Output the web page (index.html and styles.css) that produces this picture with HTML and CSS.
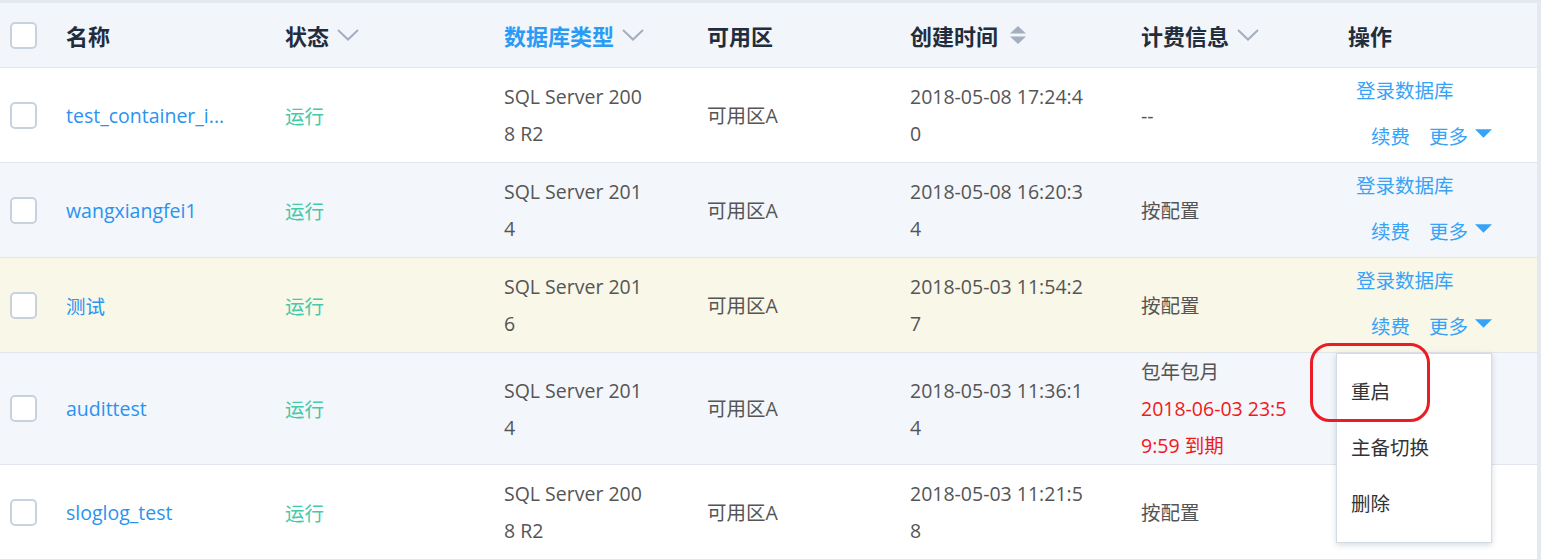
FILE: index.html
```html
<!DOCTYPE html>
<html lang="zh-CN">
<head>
<meta charset="utf-8">
<title>实例列表</title>
<link rel="stylesheet" href="styles.css">
</head>
<body>
<div class="page">
  <div class="tbl">
    <div class="row head">
      <div class="c chk"><span class="checkbox"></span></div>
      <div class="c"><span class="th">名称</span></div>
      <div class="c"><span class="th">状态</span><svg class="chev" viewBox="0 0 22 12"><polyline points="1,1 11,10.5 21,1"/></svg></div>
      <div class="c"><span class="th active">数据库类型</span><svg class="chev" viewBox="0 0 22 12"><polyline points="1,1 11,10.5 21,1"/></svg></div>
      <div class="c"><span class="th">可用区</span></div>
      <div class="c"><span class="th">创建时间</span><svg class="sort" viewBox="0 0 16 18"><polygon points="8,0 16,7.5 0,7.5"/><polygon points="0,10.5 16,10.5 8,18"/></svg></div>
      <div class="c"><span class="th">计费信息</span><svg class="chev" viewBox="0 0 22 12"><polyline points="1,1 11,10.5 21,1"/></svg></div>
      <div class="c"><span class="th">操作</span></div>
    </div>

    <div class="row">
      <div class="c chk"><span class="checkbox"></span></div>
      <div class="c name">test_container_i...</div>
      <div class="c run">运行</div>
      <div class="c txt w-type">SQL Server 2008 R2</div>
      <div class="c txt">可用区A</div>
      <div class="c txt w-time">2018-05-08 17:24:40</div>
      <div class="c txt">--</div>
      <div class="c ops"><a class="op1">登录数据库</a><div class="op2"><a>续费</a><a>更多</a><svg class="tri" viewBox="0 0 18 10"><polygon points="0,0 18,0 9,9"/></svg></div></div>
    </div>

    <div class="row alt">
      <div class="c chk"><span class="checkbox"></span></div>
      <div class="c name">wangxiangfei1</div>
      <div class="c run">运行</div>
      <div class="c txt w-type">SQL Server 2014</div>
      <div class="c txt">可用区A</div>
      <div class="c txt w-time">2018-05-08 16:20:34</div>
      <div class="c txt">按配置</div>
      <div class="c ops"><a class="op1">登录数据库</a><div class="op2"><a>续费</a><a>更多</a><svg class="tri" viewBox="0 0 18 10"><polygon points="0,0 18,0 9,9"/></svg></div></div>
    </div>

    <div class="row hover">
      <div class="c chk"><span class="checkbox"></span></div>
      <div class="c name">测试</div>
      <div class="c run">运行</div>
      <div class="c txt w-type">SQL Server 2016</div>
      <div class="c txt">可用区A</div>
      <div class="c txt w-time">2018-05-03 11:54:27</div>
      <div class="c txt">按配置</div>
      <div class="c ops"><a class="op1">登录数据库</a><div class="op2"><a>续费</a><a>更多</a><svg class="tri" viewBox="0 0 18 10"><polygon points="0,0 18,0 9,9"/></svg></div></div>
    </div>

    <div class="row alt">
      <div class="c chk"><span class="checkbox"></span></div>
      <div class="c name">audittest</div>
      <div class="c run">运行</div>
      <div class="c txt w-type">SQL Server 2014</div>
      <div class="c txt">可用区A</div>
      <div class="c txt w-time">2018-05-03 11:36:14</div>
      <div class="c txt w-bill">包年包月<br><span class="red">2018-06-03 23:59:59 到期</span></div>
      <div class="c ops covered"><a class="op1">登录数据库</a><div class="op2"><a>续费</a><a>更多</a><svg class="tri" viewBox="0 0 18 10"><polygon points="0,0 18,0 9,9"/></svg></div></div>
    </div>

    <div class="row">
      <div class="c chk"><span class="checkbox"></span></div>
      <div class="c name">sloglog_test</div>
      <div class="c run">运行</div>
      <div class="c txt w-type">SQL Server 2008 R2</div>
      <div class="c txt">可用区A</div>
      <div class="c txt w-time">2018-05-03 11:21:58</div>
      <div class="c txt">按配置</div>
      <div class="c ops"><a class="op1 covered">登录数据库</a><div class="op2"><a>续费</a><a>更多</a><svg class="tri" viewBox="0 0 18 10"><polygon points="0,0 18,0 9,9"/></svg></div></div>
    </div>
  </div>

  <ul class="menu">
    <li>重启</li>
    <li>主备切换</li>
    <li>删除</li>
  </ul>
  <div class="annot"></div>
</div>
</body>
</html>
```

FILE: styles.css
```css
* { box-sizing: border-box; }
html, body { margin: 0; padding: 0; background: #e4e9ef; }
body {
  font-family: "Open Sans", "Noto Sans CJK SC", sans-serif;
  font-size: 19.5px;
  color: #555555;
  overflow: hidden;
}
.page {
  position: relative;
  width: 1541px;
  border-top: 3px solid #e3e8ee;
  border-right: 4px solid #e4e9ef;
  background: #ffffff;
}
.tbl { display: flex; flex-direction: column; }
.row {
  display: grid;
  grid-template-columns: 66px 219px 219px 203px 203px 231px 207px 189px;
  align-items: center;
  min-height: 95px;
  border-bottom: 1px solid #e1e6ed;
  background: #ffffff;
}
.row.alt { background: #f3f6fa; }
.row.hover { background: #f8f7e8; }
.row.head {
  min-height: 65px;
  background: #f2f5f9;
}
.c {
  display: flex;
  align-items: center;
  min-width: 0;
}
.chk { padding-left: 10px; }
.checkbox {
  display: block;
  width: 27px;
  height: 27px;
  border: 2px solid #c8d2de;
  border-radius: 5px;
  background: #ffffff;
}
.th {
  font-size: 22px;
  font-weight: 700;
  color: #1f2d3d;
}
.th.active { color: #2a9bf5; }
.chev {
  width: 22px;
  height: 12px;
  margin-left: 8px;
  fill: none;
  stroke: #a3afc0;
  stroke-width: 2;
}
.sort {
  width: 16px;
  height: 18px;
  margin-left: 12px;
  fill: #a3afc0;
}
.name { color: #2a93ef; }
.run { color: #45c9a8; }
.txt {
  display: block;
  line-height: 37px;
  word-break: break-all;
}
.w-type { padding-right: 60px; }
.w-time { padding-right: 53px; }
.w-bill { padding-right: 56px; }
.red { color: #f01a1a; }
.ops {
  display: flex;
  flex-direction: column;
  align-items: flex-start;
  line-height: 46px;
  color: #36a3f7;
  margin-top: -2px;
}
.ops a { color: #36a3f7; text-decoration: none; }
.op1 { padding-left: 8px; }
.op2 {
  display: flex;
  align-items: center;
  gap: 19px;
  padding-left: 23px;
}
.tri {
  width: 17px;
  height: 10px;
  margin-left: -12px;
  margin-top: -6px;
  fill: #36a3f7;
}
.covered { visibility: hidden; }
.menu {
  position: absolute;
  left: 1336px;
  top: 350px;
  width: 156px;
  margin: 0;
  padding: 10px 0;
  list-style: none;
  background: #ffffff;
  border: 1px solid #d3dbe5;
  box-shadow: 0 2px 6px rgba(40, 60, 90, 0.18);
}
.menu li {
  height: 56px;
  line-height: 56px;
  padding-left: 14px;
  color: #333333;
}
.annot {
  position: absolute;
  left: 1310px;
  top: 340px;
  width: 120px;
  height: 79px;
  border: 3.5px solid #ec1c24;
  border-radius: 20px;
}
```
